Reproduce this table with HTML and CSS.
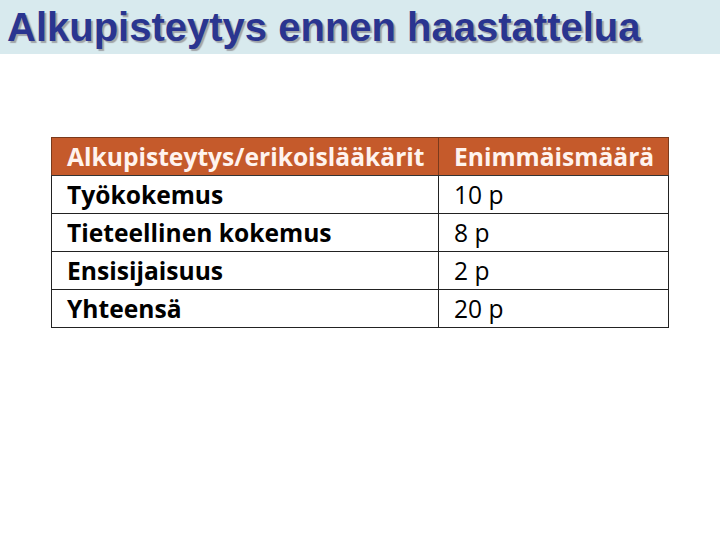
FILE: index.html
```html
<!DOCTYPE html>
<html lang="fi">
<head>
<meta charset="utf-8">
<link rel="stylesheet" href="styles.css">
</head>
<body>
<header class="titlebar">
  <h1 class="title">Alkupisteytys ennen haastattelua</h1>
</header>
<main class="content">
  <table class="scores">
    <thead>
      <tr><th class="c1">Alkupisteytys/erikoislääkärit</th><th class="c2">Enimmäismäärä</th></tr>
    </thead>
    <tbody>
      <tr><td class="c1">Työkokemus</td><td class="c2">10 p</td></tr>
      <tr><td class="c1">Tieteellinen kokemus</td><td class="c2">8 p</td></tr>
      <tr><td class="c1">Ensisijaisuus</td><td class="c2">2 p</td></tr>
      <tr><td class="c1">Yhteensä</td><td class="c2">20 p</td></tr>
    </tbody>
  </table>
</main>
</body>
</html>
```
FILE: styles.css
```css
html, body {
  margin: 0;
  padding: 0;
  background: #ffffff;
  width: 720px;
  height: 540px;
  overflow: hidden;
}
.titlebar {
  height: 54px;
  background: #d8eaee;
  box-sizing: border-box;
  padding: 6px 0 0 7px;
}
.title {
  margin: 0;
  font-family: "Liberation Sans", Arial, sans-serif;
  font-weight: bold;
  font-size: 40px;
  line-height: 42px;
  color: #2a3590;
  text-shadow: 2px 2px 1px #a0a4a8;
  white-space: nowrap;
}
.content {
  padding: 83px 0 0 51px;
}
.scores {
  border-collapse: collapse;
  width: 618px;
  font-family: "Open Sans", Lato, sans-serif;
  font-size: 24.6px;
  line-height: 30px;
}
.scores th, .scores td {
  height: 38px;
  box-sizing: border-box;
  padding: 1px 0 0 15px;
  text-align: left;
  border: 1px solid #222;
}
.scores th {
  background: #c55a2b;
  color: #fff3ee;
  font-weight: bold;
  border-color: #7a3a1c;
  border-bottom: 1px solid #333;
}
.scores .c1 { width: 387px; }
.scores td.c1 { font-weight: bold; color: #000; }
.scores td.c2 { font-weight: normal; color: #000; }
```
